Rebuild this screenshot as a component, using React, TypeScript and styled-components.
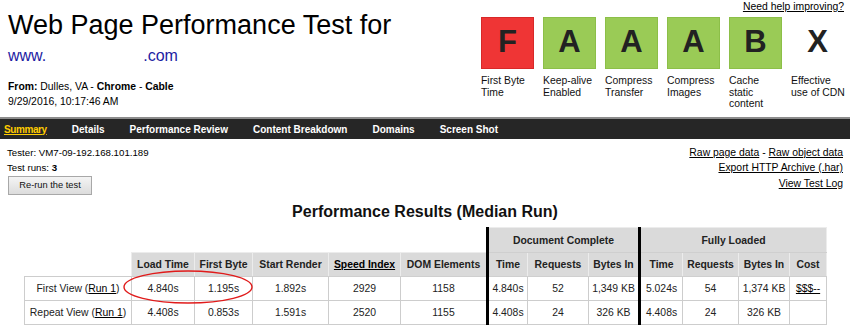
import React from 'react';
import styled, { createGlobalStyle } from 'styled-components';

const GlobalStyle = createGlobalStyle`
  html, body { margin: 0; padding: 0; background: #fff; }
  body { font-family: "Liberation Sans", Arial, sans-serif; color: #000; }
`;

const Page = styled.div`
  width: 850px;
  height: 329px;
  overflow: hidden;
`;

const Header = styled.header`
  display: flex;
  justify-content: space-between;
  height: 117px;
  padding: 0 6px 0 8px;
  box-sizing: border-box;
`;

const HeaderLeft = styled.div`
  padding-top: 10px;
`;

const Title = styled.h1`
  margin: 0;
  font-size: 27px;
  line-height: 30px;
  font-weight: normal;
  white-space: nowrap;
`;

const Url = styled.div`
  margin-top: 7px;
  font-size: 16px;
  line-height: 18px;
  color: #1c1ca3;
  display: flex;
`;

const Redacted = styled.span`
  display: inline-block;
  width: 97px;
`;

const Meta = styled.div`
  margin-top: 14px;
  font-size: 10.4px;
  line-height: 15px;
`;

const HeaderRight = styled.div`
  display: flex;
  flex-direction: column;
  align-items: flex-end;
`;

const HelpLink = styled.a`
  padding-top: 1px;
  font-size: 10.4px;
  line-height: 12px;
  color: #000;
  text-decoration: underline;
`;

const Grades = styled.div`
  display: flex;
  gap: 9px;
  margin-top: 4px;
`;

const GradeCol = styled.div`
  width: 53px;
`;

const GradeBox = styled.div<{ $tone?: 'red' | 'green' }>`
  width: 53px;
  height: 52px;
  box-sizing: border-box;
  display: flex;
  align-items: center;
  justify-content: center;
  padding-bottom: 3px;
  font-size: 31px;
  font-weight: bold;
  color: #222;
  background: ${p => (p.$tone === 'red' ? '#ef3535' : p.$tone === 'green' ? '#9acb56' : 'transparent')};
  border: 1px solid ${p => (p.$tone === 'red' ? '#d82828' : p.$tone === 'green' ? '#8cbf48' : 'transparent')};
`;

const GradeLabel = styled.div`
  margin-top: 6px;
  width: 55px;
  font-size: 10.4px;
  line-height: 11.5px;
  color: #111;
`;

const Nav = styled.nav`
  display: flex;
  align-items: center;
  gap: 25px;
  height: 20px;
  padding-left: 4px;
  background: #262626;
  border-top: 2px solid #8c8c8c;
`;

const NavItem = styled.a<{ $active?: boolean }>`
  font-size: 10px;
  font-weight: bold;
  color: ${p => (p.$active ? '#ffcc00' : '#fff')};
  text-decoration: ${p => (p.$active ? 'underline' : 'none')};
  letter-spacing: ${p => (p.$active ? '-0.4px' : '0')};
  white-space: nowrap;
`;

const Info = styled.div`
  display: flex;
  justify-content: space-between;
  padding: 5.7px 7px 0 7px;
  height: 55px;
  box-sizing: border-box;
`;

const InfoLeft = styled.div`
  font-size: 9.7px;
  line-height: 15.5px;
`;

const RerunButton = styled.button`
  display: block;
  width: 84px;
  height: 19px;
  margin: 0 0 0 1px;
  padding: 0;
  font-family: "Liberation Sans", Arial, sans-serif;
  font-size: 9.3px;
  color: #111;
  background: linear-gradient(#f4f4f4, #dcdcdc);
  border: 1px solid #a8a8a8;
  border-radius: 0;
`;

const InfoRight = styled.div`
  display: flex;
  flex-direction: column;
  align-items: flex-end;
  font-size: 10.4px;
  line-height: 15.5px;
`;

const PlainLink = styled.a`
  color: #000;
  text-decoration: underline;
`;

const Heading = styled.h2`
  margin: 8px 0 0 0;
  font-size: 16px;
  line-height: 19px;
  font-weight: bold;
  text-align: center;
  color: #111;
`;

const TableWrap = styled.div`
  position: relative;
  width: 802px;
  margin: 6px auto 0 auto;
`;

const Results = styled.table`
  width: 802px;
  table-layout: fixed;
  border-collapse: collapse;
  font-size: 10.4px;
  color: #222;
`;

const Blank = styled.th`
  padding: 0;
  border: none;
  background: transparent;
`;

const Th = styled.th<{ $thick?: boolean; $h?: number }>`
  height: ${p => p.$h ?? 23}px;
  padding: 0;
  background: #dadada;
  border: 1px solid #ececec;
  border-bottom-color: #cfcfcf;
  ${p => (p.$thick ? 'border-left: 3px solid #000;' : '')}
  font-weight: bold;
  text-align: center;
  white-space: nowrap;
  color: #222;
`;

const Td = styled.td<{ $thick?: boolean }>`
  height: 23px;
  padding: 0;
  border: 1px solid #cdcdcd;
  ${p => (p.$thick ? 'border-left: 3px solid #000;' : '')}
  text-align: center;
  white-space: nowrap;
`;

const Ellipse = styled.svg`
  position: absolute;
  left: 0;
  top: 0;
  pointer-events: none;
  overflow: visible;
`;

const colWidths = [107, 63, 58, 76, 72, 87, 40, 61, 51, 43, 56, 51, 37];

const grades: { letter: string; tone?: 'red' | 'green'; label: string }[] = [
  { letter: 'F', tone: 'red', label: 'First Byte Time' },
  { letter: 'A', tone: 'green', label: 'Keep-alive Enabled' },
  { letter: 'A', tone: 'green', label: 'Compress Transfer' },
  { letter: 'A', tone: 'green', label: 'Compress Images' },
  { letter: 'B', tone: 'green', label: 'Cache static content' },
  { letter: 'X', label: 'Effective use of CDN' },
];

const navItems = ['Summary', 'Details', 'Performance Review', 'Content Breakdown', 'Domains', 'Screen Shot'];

type Row = { label: string; cells: React.ReactNode[] };

const rows: Row[] = [
  {
    label: 'First View',
    cells: ['4.840s', '1.195s', '1.892s', '2929', '1158', '4.840s', '52', '1,349 KB', '5.024s', '54', '1,374 KB', <PlainLink key="c">$$$--</PlainLink>],
  },
  {
    label: 'Repeat View',
    cells: ['4.408s', '0.853s', '1.591s', '2520', '1155', '4.408s', '24', '326 KB', '4.408s', '24', '326 KB', ''],
  },
];

const thickIdx = new Set([5, 8]);

export default function App() {
  return (
    <Page>
      <GlobalStyle />
      <Header>
        <HeaderLeft>
          <Title>Web Page Performance Test for</Title>
          <Url>
            <span>www.</span>
            <Redacted />
            <span>.com</span>
          </Url>
          <Meta>
            <b>From:</b> Dulles, VA - <b>Chrome</b> - <b>Cable</b>
            <br />
            9/29/2016, 10:17:46 AM
          </Meta>
        </HeaderLeft>
        <HeaderRight>
          <HelpLink>Need help improving?</HelpLink>
          <Grades>
            {grades.map((g, i) => (
              <GradeCol key={i}>
                <GradeBox $tone={g.tone}>{g.letter}</GradeBox>
                <GradeLabel>{g.label}</GradeLabel>
              </GradeCol>
            ))}
          </Grades>
        </HeaderRight>
      </Header>
      <Nav>
        {navItems.map((n, i) => (
          <NavItem key={n} $active={i === 0}>
            {n}
          </NavItem>
        ))}
      </Nav>
      <Info>
        <InfoLeft>
          <div>Tester: VM7-09-192.168.101.189</div>
          <div>
            Test runs: <b>3</b>
          </div>
          <RerunButton>Re-run the test</RerunButton>
        </InfoLeft>
        <InfoRight>
          <div>
            <PlainLink>Raw page data</PlainLink> - <PlainLink>Raw object data</PlainLink>
          </div>
          <PlainLink>Export HTTP Archive (.har)</PlainLink>
          <PlainLink>View Test Log</PlainLink>
        </InfoRight>
      </Info>
      <Heading>Performance Results (Median Run)</Heading>
      <TableWrap>
        <Results>
          <colgroup>
            {colWidths.map((w, i) => (
              <col key={i} style={{ width: w }} />
            ))}
          </colgroup>
          <thead>
            <tr>
              <Blank colSpan={6} />
              <Th colSpan={3} $thick $h={24}>
                Document Complete
              </Th>
              <Th colSpan={4} $thick $h={24}>
                Fully Loaded
              </Th>
            </tr>
            <tr>
              <Blank />
              <Th>Load Time</Th>
              <Th>First Byte</Th>
              <Th>Start Render</Th>
              <Th>
                <PlainLink>Speed Index</PlainLink>
              </Th>
              <Th>DOM Elements</Th>
              <Th $thick>Time</Th>
              <Th>Requests</Th>
              <Th>Bytes In</Th>
              <Th $thick>Time</Th>
              <Th>Requests</Th>
              <Th>Bytes In</Th>
              <Th>Cost</Th>
            </tr>
          </thead>
          <tbody>
            {rows.map(r => (
              <tr key={r.label}>
                <Td>
                  {r.label} (<PlainLink>Run 1</PlainLink>)
                </Td>
                {r.cells.map((c, i) => (
                  <Td key={i} $thick={thickIdx.has(i)}>
                    {c}
                  </Td>
                ))}
              </tr>
            ))}
          </tbody>
        </Results>
        <Ellipse width="802" height="110">
          <ellipse cx="164" cy="60" rx="64" ry="16" fill="none" stroke="#e01b1b" strokeWidth="1.4" />
        </Ellipse>
      </TableWrap>
    </Page>
  );
}
